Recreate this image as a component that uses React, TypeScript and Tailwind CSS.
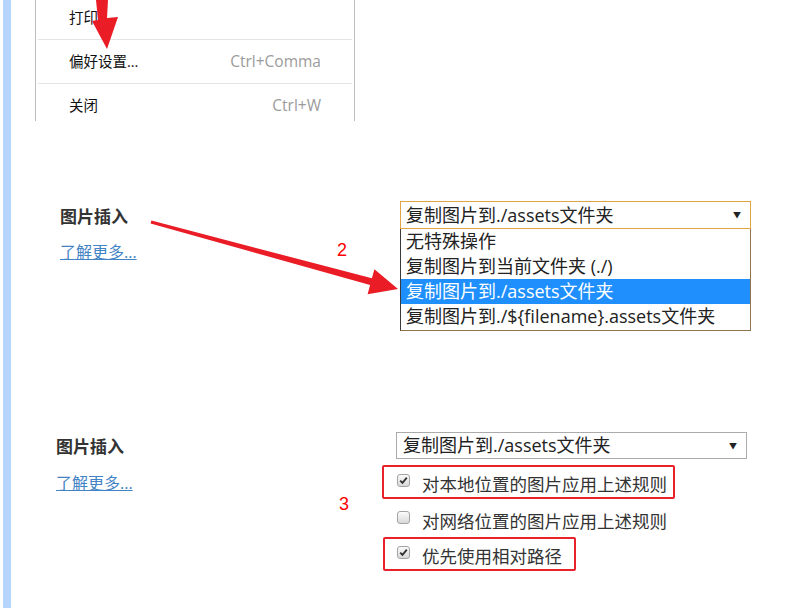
import React from "react";

const menuItems = [
  { label: "打印", key: "" },
  { label: "偏好设置...", key: "Ctrl+Comma" },
  { label: "关闭", key: "Ctrl+W" },
];

const options = [
  "无特殊操作",
  "复制图片到当前文件夹 (./)",
  "复制图片到./assets文件夹",
  "复制图片到./${filename}.assets文件夹",
];

function CheckBox({ checked }: { checked: boolean }) {
  return (
    <span className="mb-[4px] flex h-[13px] w-[13px] shrink-0 items-center justify-center rounded-[3px] border border-[#a3a3a3] bg-gradient-to-b from-[#fbfbfb] to-[#d9d9d9]">
      {checked && (
        <svg width="9" height="9" viewBox="0 0 9 9">
          <path d="M1.2 4.6 L3.5 6.9 L7.8 1.6" fill="none" stroke="#333" strokeWidth="1.8" />
        </svg>
      )}
    </span>
  );
}

function CheckRow({
  label,
  checked,
  boxed,
  className,
}: {
  label: string;
  checked: boolean;
  boxed: boolean;
  className: string;
}) {
  return (
    <div
      className={`flex h-[34px] items-center gap-[12px] rounded-[2px] border-2 ${
        boxed ? "border-[#e8212b]" : "border-transparent"
      } ${className}`}
    >
      <CheckBox checked={checked} />
      <span className="mt-[5px] whitespace-nowrap text-[17.5px] text-[#333]">{label}</span>
    </div>
  );
}

export default function App() {
  return (
    <div className="relative flex h-[608px] w-[801px] overflow-hidden bg-white font-['Open_Sans','Noto_Sans_CJK_SC',sans-serif]">
      <div className="w-[3px] shrink-0" />
      <div className="w-[8px] shrink-0 bg-[#b6d5fc]" />

      <div className="flex flex-1 flex-col">
        {/* menu crop */}
        <div className="ml-[24px] h-[121px] w-[320px] overflow-hidden border-x border-[#bdbdbd]">
          <div className="-mt-[4px]">
            {menuItems.map((m, i) => (
              <div key={m.label}>
                {i > 0 && <div className="mx-[2px] h-px bg-[#e4e4e4]" />}
                <div className="flex h-[43px] items-center justify-between px-[33px]">
                  <span className="text-[14.5px] text-[#111]">{m.label}</span>
                  <span className="text-[15.5px] text-[#9b9b9b]">{m.key}</span>
                </div>
              </div>
            ))}
          </div>
        </div>

        {/* image insert, open dropdown */}
        <div className="mt-[80px] flex">
          <div className="ml-[49px] w-[340px]">
            <div className="flex h-[32px] items-center text-[17px] font-bold text-[#333]">图片插入</div>
            <div className="mt-[3px] flex h-[32px] items-center">
              <span className="text-[16px] text-[#4183c4] underline">了解更多...</span>
            </div>
          </div>
          <div className="w-[351px]">
            <div className="flex h-[28px] items-center justify-between border border-[#e0a446] pl-[5px] pr-[9px]">
              <span className="text-[18px] text-[#222]">复制图片到./assets文件夹</span>
              <span className="text-[8px] text-[#222]">▼</span>
            </div>
            <div className="border-x border-b border-[#8f7650] border-l-[#3a3a3a] pb-px">
              {options.map((o, i) => (
                <div
                  key={o}
                  className={`flex h-[25px] items-center whitespace-nowrap pl-[5px] text-[18px] ${
                    i === 2 ? "bg-[#1e8ffd] text-white" : "text-[#222]"
                  }`}
                >
                  {o}
                </div>
              ))}
            </div>
          </div>
        </div>

        {/* image insert, options */}
        <div className="mt-[101px] flex">
          <div className="ml-[45px] w-[340px]">
            <div className="flex h-[30px] items-center text-[17px] font-bold text-[#333]">图片插入</div>
            <div className="mt-[4px] flex h-[34px] items-center">
              <span className="text-[16px] text-[#4183c4] underline">了解更多...</span>
            </div>
          </div>
          <div className="w-[351px]">
            <div className="flex h-[27px] items-center justify-between border border-[#ababab] pl-[6px] pr-[9px]">
              <span className="text-[18px] text-[#222]">复制图片到./assets文件夹</span>
              <span className="text-[8px] text-[#222]">▼</span>
            </div>
            <CheckRow label="对本地位置的图片应用上述规则" checked boxed className="-ml-[14px] mt-[6px] w-[293px] pl-[13px]" />
            <CheckRow label="对网络位置的图片应用上述规则" checked={false} boxed={false} className="-ml-[14px] mt-[3px] w-[293px] pl-[13px]" />
            <CheckRow label="优先使用相对路径" checked boxed className="-ml-[13px] mt-[1px] w-[193px] pl-[12px]" />
          </div>
        </div>
      </div>

      {/* annotations */}
      <svg className="pointer-events-none absolute left-0 top-0" width="801" height="608" viewBox="0 0 801 608">
        <polygon points="96,0 108,0 107,18 118,17 107,49 92,21 98,20" fill="#ea1c26" />
        <polygon
          points="151.4,220.6 371.9,278.3 374.4,269.2 398,289 367.6,294.2 370.1,285.1 150.6,223.4"
          fill="#ea1c26"
        />
      </svg>
      <span className="absolute left-[337px] top-[237px] font-['Liberation_Sans',sans-serif] text-[18px] text-[#ff0000]">2</span>
      <span className="absolute left-[339px] top-[491px] font-['Liberation_Sans',sans-serif] text-[18px] text-[#ff0000]">3</span>
    </div>
  );
}
